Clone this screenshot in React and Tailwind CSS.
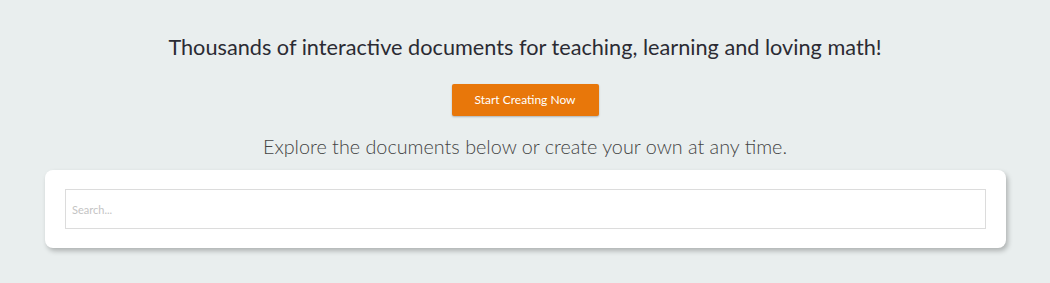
export default function App() {
  return (
    <div className="min-h-[283px] w-full bg-[#e9eeee] font-['Lato','Liberation_Sans',sans-serif]">
      <div className="flex flex-col items-center pt-[33px]">
        <h1 className="text-[21.7px] leading-[28px] text-[#2b2b33] font-normal">
          Thousands of interactive documents for teaching, learning and loving math!
        </h1>
        <button className="mt-[23px] h-[32px] w-[147px] rounded-[2px] bg-[#e8770a] text-[12px] text-white shadow-[0_1px_2px_rgba(0,0,0,0.25)]">
          Start Creating Now
        </button>
        <p className="mt-[17px] text-[19.8px] leading-[26px] font-light text-[#444]">
          Explore the documents below or create your own at any time.
        </p>
      </div>
      <div className="ml-[45px] mt-[11px] mr-[44px] rounded-[8px] bg-white px-[20px] py-[19px] shadow-[2px_3px_5px_rgba(0,0,0,0.25)]">
        <input
          type="text"
          placeholder="Search..."
          className="block h-[40px] w-full border border-[#dcdcdc] px-[6px] text-[11px] text-[#333] placeholder:text-[#c4c4c4] outline-none font-['Lato','Liberation_Sans',sans-serif]"
        />
      </div>
    </div>
  );
}
